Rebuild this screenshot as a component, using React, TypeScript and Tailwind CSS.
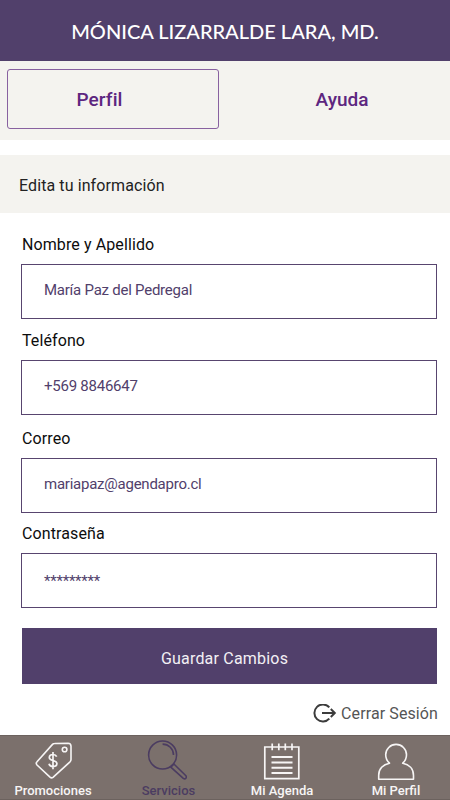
const PriceTagIcon = () => (
  <svg width="38" height="38" viewBox="0 0 38 38" fill="none" stroke="#f7f5f5" strokeWidth="1.6" strokeLinejoin="round">
    <path d="M19.5 1.5 33 1.2Q36 1.2 36 4.2V17.5Q36 18.8 35 19.8L18 35.4Q16.5 36.5 15 35.2L2 23Q.5 21.3 2 19.8L17.5 2.4Q18.4 1.5 19.5 1.5Z" />
    <circle cx="29.6" cy="7.5" r="2.3" />
    <path d="M21.7 14.6C21 13 19.8 12.5 18 12.5c-2.2 0-3.7 1-3.7 2.9 0 4.2 7.6 2 7.6 6.2 0 2-1.6 3-3.9 3-2.2 0-3.6-.9-4-2.8M18 10v17.2" strokeWidth="1.7" />
  </svg>
);

const SearchIcon = () => (
  <svg width="40" height="42" viewBox="0 0 40 42" fill="none" stroke="#4b3c61" strokeWidth="1.6" strokeLinejoin="round">
    <circle cx="15.6" cy="15" r="14" />
    <path d="M15.6 4.1A10.9 10.9 0 0 1 26.5 15" />
    <path d="m23.8 27.1 3.1-3.1 12 11.8q1 1.3 0 2.4t-2.6.2Z" />
  </svg>
);

const AgendaIcon = () => (
  <svg width="38" height="38" viewBox="0 0 38 38" fill="none" stroke="#f7f5f5" strokeWidth="1.7">
    <path d="M7 4H1.8v31.7h34V4h-5.2M7 4h24" />
    <path d="M9.2.6v6.6M15.8.6v6.6M22.3.6v6.6M29 .6v6.6" />
    <path d="M8.5 14h21M8.5 19.5h21M8.5 24.7h21M8.5 30h21" strokeWidth="2" />
  </svg>
);

const UserIcon = () => (
  <svg width="38" height="38" viewBox="0 0 38 38" fill="none" stroke="#f7f5f5" strokeWidth="1.6" strokeLinejoin="round">
    <path d="M1.7 36.2v-4C1.7 26 6 21.4 12.5 20.2 10 18 8.7 15 8.7 11.8a10.4 10.4 0 0 1 20.8 0c0 3.2-1.3 6.2-3.8 8.4 6.5 1.2 10.8 5.8 10.8 12.3v3.7Z" />
  </svg>
);

const LogoutIcon = () => (
  <svg width="24" height="20" viewBox="0 0 24 20" fill="none" stroke="#3c3c3c" strokeWidth="2">
    <path d="M16.3 3.4A8.5 8.5 0 1 0 16.3 14.6" />
    <path d="M9 9h12.6M17.8 5l4 4-4 4" />
  </svg>
);

const Field = ({ label, value, className, pad = "pb-[3px]" }: { label: string; value: string; className: string; pad?: string }) => (
  <div className={className}>
    <div className="h-5 pt-px pl-px text-base leading-5 text-[#0d0d0d] tracking-[0.1px]">{label}</div>
    <div className={`mt-[10px] flex h-[55px] w-[416px] items-center border border-[#58456f] pl-[22px] text-[15px] text-[#51406b] tracking-[-0.24px] ${pad}`}>
      {value}
    </div>
  </div>
);

export default function App() {
  return (
    <div className="flex h-[800px] w-[450px] flex-col overflow-hidden bg-white font-['Roboto',sans-serif]">
      <header className="flex h-[61px] shrink-0 items-center justify-center bg-[#51406b]">
        <h1 className="font-['Lato',sans-serif] text-xl font-medium text-white whitespace-nowrap">
          MÓNICA LIZARRALDE LARA, MD.
        </h1>
      </header>
      <nav className="flex h-[79px] shrink-0 bg-[#f4f3ef] pt-2 pl-[7px] text-[19px] font-medium text-[#5d2680]">
        <button className="flex h-[60px] w-[212px] items-center justify-center rounded-[3px] border border-[#8861a0] pt-[2px] pr-[27px] tracking-[0.1px]">
          Perfil
        </button>
        <button className="ml-[17px] flex h-[60px] w-[212px] items-center justify-center pt-[2px]">Ayuda</button>
      </nav>
      <h2 className="mt-[15px] flex h-[58px] shrink-0 items-center bg-[#f4f3ef] pt-1 pl-[19px] text-base text-[#222] tracking-[0.1px]">
        Edita tu información
      </h2>
      <main className="flex flex-1 flex-col pl-[21px]">
        <Field label="Nombre y Apellido" value="María Paz del Pedregal" className="mt-[21px]" />
        <Field label="Teléfono" value="+569 8846647" className="mt-[11px]" />
        <Field label="Correo" value="mariapaz@agendapro.cl" className="mt-[13px]" />
        <Field label="Contraseña" value="*********" className="mt-[10px]" pad="pt-[2px]" />
        <button className="mt-5 ml-px flex h-14 w-[415px] items-center justify-center bg-[#51406b] pt-[6px] pr-[10px] text-base text-[#f3f0f5] tracking-[0.2px]">
          Guardar Cambios
        </button>
        <button className="mt-[18px] flex h-[22px] w-[417px] items-center justify-end gap-1 pt-px text-base text-[#555] tracking-[0.1px]">
          <LogoutIcon />
          Cerrar Sesión
        </button>
      </main>
      <footer className="grid h-[65px] shrink-0 grid-cols-[106px_125px_102px_117px] border-t border-b border-[#6c625e] bg-[#7b706c] text-[13px] font-medium text-[#f7f5f5]">
        <div className="flex flex-col items-center pt-[6px]">
          <div className="pl-[2px]">
            <PriceTagIcon />
          </div>
          <span className="mt-[3px] leading-4">Promociones</span>
        </div>
        <div className="flex flex-col items-center pt-1 text-[#4b3c61]">
          <div className="pr-[3px]">
            <SearchIcon />
          </div>
          <span className="mt-px leading-4">Servicios</span>
        </div>
        <div className="flex flex-col items-center pt-[7px]">
          <AgendaIcon />
          <span className="mt-[2px] leading-4">Mi Agenda</span>
        </div>
        <div className="flex flex-col items-center pt-[7px] pl-[9px]">
          <UserIcon />
          <span className="mt-[2px] leading-4">Mi Perfil</span>
        </div>
      </footer>
    </div>
  );
}
